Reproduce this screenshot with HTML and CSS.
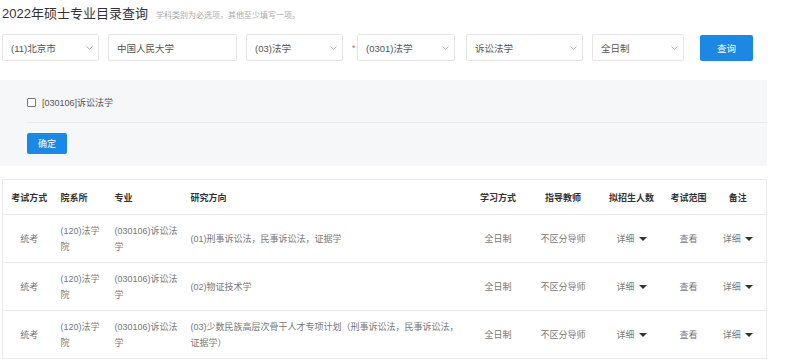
FILE: index.html
```html
<!DOCTYPE html>
<html lang="zh-CN">

<head>
  <meta charset="UTF-8" />
  <meta name="viewport" content="width=device-width, initial-scale=1.0" />
  <title>2022年硕士专业目录查询</title>
  <link rel="stylesheet" href="styles.css">
</head>

<body>
  <div class="cabecera">
    <h1>2022年硕士专业目录查询</h1>
    <span class="nota">学科类别为必选项，其他至少填写一项。</span>
  </div>

  <form class="filtros">
    <div class="campo sel1">
      <span>(11)北京市</span>
      <svg class="flecha" width="7" height="4" viewBox="0 0 7 4"><path d="M0.5 0.5 L3.5 3.3 L6.5 0.5" fill="none" stroke="#999" stroke-width="0.8" /></svg>
    </div>
    <div class="campo texto">
      <span>中国人民大学</span>
    </div>
    <div class="campo sel3">
      <span>(03)法学</span>
      <svg class="flecha" width="7" height="4" viewBox="0 0 7 4"><path d="M0.5 0.5 L3.5 3.3 L6.5 0.5" fill="none" stroke="#999" stroke-width="0.8" /></svg>
    </div>
    <div class="obligatorio">
      <span class="asterisco">*</span>
      <div class="campo sel4">
        <span>(0301)法学</span>
        <svg class="flecha" width="7" height="4" viewBox="0 0 7 4"><path d="M0.5 0.5 L3.5 3.3 L6.5 0.5" fill="none" stroke="#999" stroke-width="0.8" /></svg>
      </div>
    </div>
    <div class="campo sel5">
      <span>诉讼法学</span>
      <svg class="flecha" width="7" height="4" viewBox="0 0 7 4"><path d="M0.5 0.5 L3.5 3.3 L6.5 0.5" fill="none" stroke="#999" stroke-width="0.8" /></svg>
    </div>
    <div class="campo sel6">
      <span>全日制</span>
      <svg class="flecha" width="7" height="4" viewBox="0 0 7 4"><path d="M0.5 0.5 L3.5 3.3 L6.5 0.5" fill="none" stroke="#999" stroke-width="0.8" /></svg>
    </div>
    <button type="button" class="boton consultar">查询</button>
  </form>

  <div class="panel">
    <label class="opcion"><span class="casilla"></span>[030106]诉讼法学</label>
    <div class="separador"></div>
    <button type="button" class="boton confirmar">确定</button>
  </div>

  <table class="tabla">
    <colgroup>
      <col style="width: 53px">
      <col style="width: 55px">
      <col style="width: 76px">
      <col style="width: 279px">
      <col style="width: 65px">
      <col style="width: 65px">
      <col style="width: 72px">
      <col style="width: 42px">
      <col style="width: 57px">
    </colgroup>
    <thead>
      <tr>
        <th class="centro">考试方式</th>
        <th>院系所</th>
        <th>专业</th>
        <th>研究方向</th>
        <th class="centro">学习方式</th>
        <th class="centro">指导教师</th>
        <th class="centro">拟招生人数</th>
        <th class="centro">考试范围</th>
        <th class="centro">备注</th>
      </tr>
    </thead>
    <tbody>
      <tr>
        <td class="centro">统考</td>
        <td>(120)法学院</td>
        <td>(030106)诉讼法学</td>
        <td>(01)刑事诉讼法，民事诉讼法，证据学</td>
        <td class="centro">全日制</td>
        <td class="centro">不区分导师</td>
        <td class="centro"><span class="detalle">详细</span></td>
        <td class="centro">查看</td>
        <td class="centro"><span class="detalle">详细</span></td>
      </tr>
      <tr>
        <td class="centro">统考</td>
        <td>(120)法学院</td>
        <td>(030106)诉讼法学</td>
        <td>(02)物证技术学</td>
        <td class="centro">全日制</td>
        <td class="centro">不区分导师</td>
        <td class="centro"><span class="detalle">详细</span></td>
        <td class="centro">查看</td>
        <td class="centro"><span class="detalle">详细</span></td>
      </tr>
      <tr>
        <td class="centro">统考</td>
        <td>(120)法学院</td>
        <td>(030106)诉讼法学</td>
        <td>(03)少数民族高层次骨干人才专项计划（刑事诉讼法，民事诉讼法，证据学）</td>
        <td class="centro">全日制</td>
        <td class="centro">不区分导师</td>
        <td class="centro"><span class="detalle">详细</span></td>
        <td class="centro">查看</td>
        <td class="centro"><span class="detalle">详细</span></td>
      </tr>
    </tbody>
  </table>
</body>

</html>
```

FILE: styles.css
```css
body {
  margin: 0;
  font-family: "Liberation Sans", "Noto Sans CJK SC", sans-serif;
  background-color: #fff;
  color: #333;
  width: 787px;
}

.cabecera {
  display: flex;
  align-items: baseline;
  height: 28px;
  line-height: 28px;
  padding-left: 2px;
}

h1 {
  margin: 0;
  font-size: 13px;
  font-weight: normal;
  color: #333;
}

.nota {
  margin-left: 8px;
  font-size: 8px;
  color: #aaa;
}

/* fila de filtros */
.filtros {
  display: flex;
  align-items: center;
  gap: 9px;
  margin-top: 6px;
  padding-left: 2px;
}

.campo {
  display: flex;
  align-items: center;
  justify-content: space-between;
  box-sizing: border-box;
  height: 27px;
  padding: 0 5px 0 8px;
  border: 1px solid #e6e6e6;
  border-radius: 2px;
  background: white;
  font-size: 9.5px;
  color: #555;
}

.sel1 { width: 97px; }
.texto { width: 129px; }
.sel3 { width: 97px; }
.sel4 { width: 98px; }
.sel5 { width: 117px; margin-left: 2px; }
.sel6 { width: 92px; }

.obligatorio {
  display: flex;
  align-items: center;
}

.asterisco {
  width: 5px;
  font-size: 9px;
  color: #e55;
}

.boton {
  border: none;
  border-radius: 2px;
  background-color: #1c88e4;
  color: white;
  font-family: inherit;
  cursor: pointer;
}

.consultar {
  width: 53px;
  height: 26px;
  margin-left: 7px;
  font-size: 9.5px;
}

/* panel gris */
.panel {
  margin-top: 19px;
  width: 767px;
  height: 86px;
  box-sizing: border-box;
  padding: 14px 0 0 27px;
  background-color: #f6f7f9;
}

.opcion {
  display: flex;
  align-items: center;
  height: 16px;
  font-size: 9px;
  color: #555;
}

.casilla {
  width: 7px;
  height: 7px;
  margin-right: 6px;
  border: 1px solid #777;
  border-radius: 1px;
  background: white;
}

.separador {
  margin-top: 12px;
  border-top: 1px solid #e8eaee;
}

.confirmar {
  display: block;
  margin-top: 10px;
  width: 40px;
  height: 21px;
  font-size: 9px;
}

/* tabla */
.tabla {
  margin: 13px 0 0 2px;
  width: 765px;
  table-layout: fixed;
  border-collapse: collapse;
  border: 1px solid #ebebeb;
  font-size: 9px;
}

.tabla th {
  height: 34px;
  padding: 0 4px;
  text-align: left;
  font-weight: bold;
  color: #333;
  white-space: nowrap;
  border-bottom: 1px solid #ebebeb;
}

.tabla td {
  height: 47px;
  padding: 0 2px 0 4px;
  line-height: 16px;
  color: #777;
  border-bottom: 1px solid #ebebeb;
}

.tabla td:nth-child(2) {
  padding: 0 8px 0 5px;
}

.tabla th:nth-child(2) {
  padding-left: 5px;
}

.tabla td:nth-child(3) {
  padding-right: 0;
}

.tabla .centro {
  padding: 0;
  text-align: center;
}

.detalle::after {
  content: "";
  display: inline-block;
  margin-left: 4px;
  vertical-align: 1px;
  border-left: 4px solid transparent;
  border-right: 4px solid transparent;
  border-top: 4px solid #333;
}
```
